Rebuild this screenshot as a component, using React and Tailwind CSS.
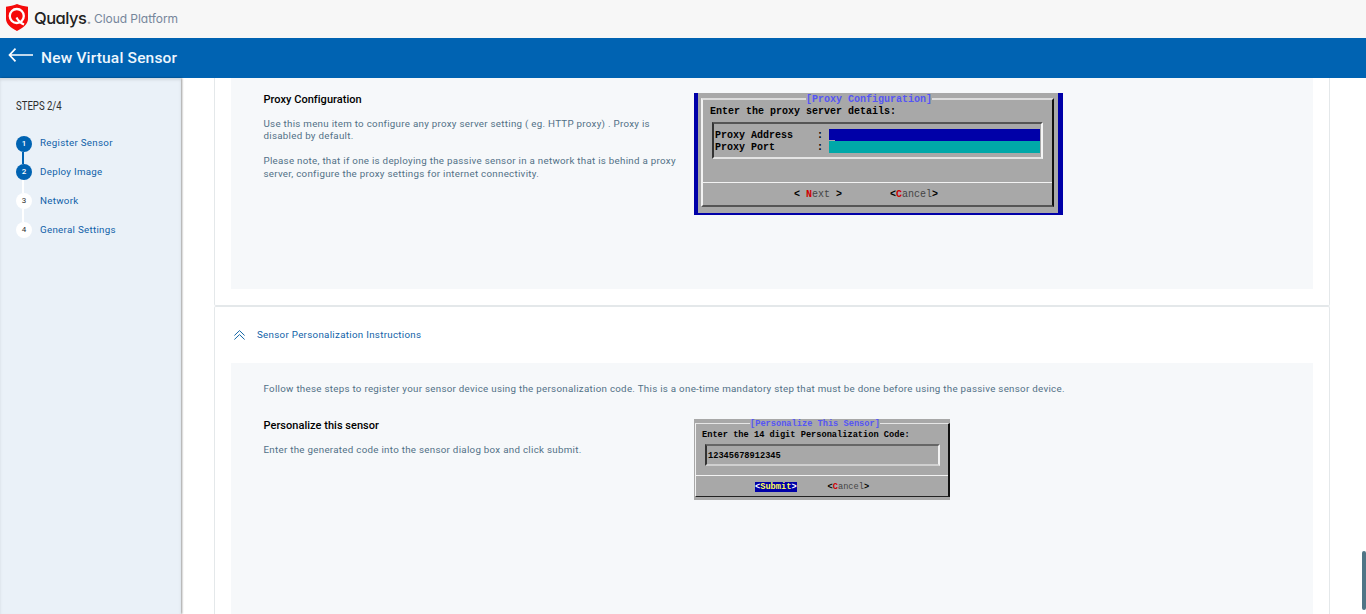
function Step({ n, label, done, line, lineDone, first }) {
  return (
    <li className={`flex items-start ${first ? 'h-[28px]' : 'h-[29px]'}`}>
      <div className="flex h-full w-4 shrink-0 flex-col items-center">
        <span className={`flex size-4 shrink-0 items-center justify-center rounded-full text-[8px] ${done ? 'bg-[#0063b2] font-medium text-white' : 'bg-white text-[#333]'}`}>{n}</span>
        {line && <span className={`mr-[2px] w-[2px] grow ${lineDone ? 'bg-[#0063b2]' : 'bg-white'}`} />}
      </div>
      <span className={`ml-2 text-[9.75px] leading-[14px] tracking-[0.29px] whitespace-nowrap text-[#0f5fa8] ${first ? '' : 'mt-px'}`}>{label}</span>
    </li>
  );
}

function ProxyDialog() {
  return (
    <div className="h-[122px] w-[369px] shrink-0 border-r-[5px] border-b-2 border-l-4 border-[#0000a8] bg-[#a8a8a8] pt-[5px] pr-[4px] pl-[3px] font-['Liberation_Mono',monospace] text-[10px] leading-[12px] font-bold whitespace-pre text-black">
      <div className="relative h-[109px] w-[353px] border-2 border-t-[#dcdcdc] border-r-[#111] border-b-[#555] border-l-[#f2f2f2]">
        <span className="absolute -top-[6px] left-[103px] h-[11px] bg-[#a8a8a8] leading-[11px] text-[#5555f5]">[Proxy Configuration]</span>
        <div className="pt-[6px] pl-[7px]">Enter the proxy server details:</div>
        <div className="mt-[4px] ml-[9px] h-[37px] w-[331px] border-2 border-t-[#555] border-r-[#f5f5f5] border-b-[#e4e4e4] border-l-[#333] pt-[5px] pl-[1px]">
          <div className="flex"><span className="w-[114px] leading-[13px]">Proxy Address    :</span><span className="h-3 w-[211px] bg-[#0000a8]"><span className="mt-[11px] block h-px w-[6px] bg-[#a8a8a8]" /></span></div>
          <div className="-mt-px flex"><span className="w-[114px] leading-[13px]">Proxy Port       :</span><span className="h-3 w-[211px] bg-[#00a8a8]" /></div>
        </div>
        <div className="mt-[23px] flex border-t border-[#f2f2f2] pt-[6px] pl-[91px]">
          <span className="w-[96px]">{'< '}<b className="text-[#d00000]">N</b><span className="font-normal text-[#444]">ext</span>{' >'}</span>
          <span>{'<'}<b className="text-[#d00000]">C</b><span className="font-normal text-[#444]">ancel</span>{'>'}</span>
        </div>
      </div>
    </div>
  );
}

function PersonalizeDialog() {
  return (
    <div className="h-[81px] w-[256px] shrink-0 bg-[#a8a8a8] pt-1 pl-px font-['Liberation_Mono',monospace] text-[8.67px] leading-[10px] font-bold tracking-normal whitespace-pre text-black">
      <div className="relative h-[74px] w-[255px] border border-r-2 border-t-[#e6e6e6] border-r-[#111] border-b-[#222] border-l-[#f2f2f2]">
        <span className="absolute -top-[5px] left-[54px] bg-[#a8a8a8] text-[#5555f5]">[Personalize This Sensor]</span>
        <div className="pt-[6px] pl-[6px]">Enter the 14 digit Personalization Code:</div>
        <div className="mt-[4px] ml-[9px] h-[22px] w-[235px] border-2 border-t-[#666] border-r-[#f2f2f2] border-b-[#d0d0d0] border-l-[#333] pt-[5px] pl-[1px]">12345678912345</div>
        <div className="mt-[9px] flex border-t border-[#f2f2f2] pt-[6px] pl-[59px]">
          <span className="mr-[31px] bg-[#0000a8] text-white">{'<'}<span className="text-[#ffff55]">Submit</span>{'>'}</span>
          <span>{'<'}<b className="text-[#d00000]">C</b><span className="font-normal text-[#444]">ancel</span>{'>'}</span>
        </div>
      </div>
    </div>
  );
}

export default function App() {
  return (
    <div className="flex h-[614px] w-[1366px] flex-col overflow-hidden bg-white font-['Roboto',sans-serif]">
      <header className="flex h-[38px] shrink-0 items-center bg-[#f7f7f7] pb-[2px] pl-[6px]">
        <svg className="mb-[2px] h-[27px] w-[22px]" viewBox="0 0 22 27" fill="none">
          <path d="M0 2.700C4 2.400 7.500 1.500 11 0c3.500 1.500 7 2.400 11 2.700v12.300c0 5-5 9-11 12C5 24 0 20 0 15z" fill="#f50a0a" />
          <circle cx="10.800" cy="12" r="7" stroke="#fff" strokeWidth="2.300" />
          <path d="M10.500 13.500c1.700 3.500 4 5.500 7.500 7" stroke="#fff" strokeWidth="2.100" />
        </svg>
        <span className="ml-[6px] font-['Inter',sans-serif] text-[16.5px] leading-6 font-medium tracking-[-0.5px] text-[#222] [font-feature-settings:'cv11']">Qualys<span className="text-[#999]">.</span></span>
        <span className="ml-[3px] pt-px font-['Inter',sans-serif] text-[12px] leading-6 tracking-[-0.05px] text-[#76869b] [font-feature-settings:'cv11']">Cloud Platform</span>
      </header>
      <div className="flex h-10 shrink-0 items-center bg-[#0063b2] pl-2">
        <svg className="mb-[6px] h-[14px] w-[25px]" viewBox="0 0 25 14" fill="none" stroke="#fff" strokeWidth="1.700"><path d="M7.500 .7 1.500 7l6 6.300M1.500 7H25" /></svg>
        <h1 className="ml-2 pt-px text-[15.5px] font-medium tracking-[0.18px] text-[#eef6fd]">New Virtual Sensor</h1>
      </div>
      <div className="flex min-h-0 grow">
        <aside className="z-10 w-[181px] shrink-0 bg-[#eaf1f8] pl-4 shadow-[1px_0_2px_rgba(0,0,0,0.4),inset_0_2px_3px_rgba(0,0,0,0.1)]">
          <div className="mt-[15px] h-[18px]"><span className="inline-block origin-left scale-x-[0.71] text-[13.5px] leading-[18px] whitespace-nowrap text-[#2d2d2d]">STEPS 2/4</span></div>
          <ol className="mt-[25px]">
            <Step n="1" label="Register Sensor" done line lineDone first />
            <Step n="2" label="Deploy Image" done line />
            <Step n="3" label="Network" line />
            <Step n="4" label="General Settings" />
          </ol>
        </aside>
        <main className="relative grow pl-[33px]">
          <section className="h-[228px] w-[1116px] rounded-b-[2px] border-x border-b border-[#e4e8ea] px-4">
            <div className="flex h-[211px] bg-[#f6f8fa] pt-[15px] pl-[32.5px]">
              <div className="w-[430.500px] shrink-0 text-[9.75px] tracking-[0.28px] text-[#517086]">
                <h2 className="text-[11px] leading-[14px] font-medium tracking-[0.03px] text-black">Proxy Configuration</h2>
                <p className="mt-[11px] leading-[12px] whitespace-nowrap">Use this menu item to configure any proxy server setting ( eg. HTTP proxy) . Proxy is<br />disabled by default.</p>
                <p className="mt-[12px] leading-[13px] whitespace-nowrap">Please note, that if one is deploying the passive sensor in a network that is behind a proxy<br />server, configure the proxy settings for internet connectivity.</p>
              </div>
              <ProxyDialog />
            </div>
          </section>
          <section className="h-[320px] w-[1116px] rounded-t-[2px] border-x border-t border-[#e4e8ea] px-4">
            <div className="flex h-[56px] items-center pl-[3px]">
              <svg className="h-[10px] w-[11px]" viewBox="0 0 11 10" fill="none" stroke="#1769a8" strokeWidth="1"><path d="M.4 5.500 5.500.6l5.100 4.900M.4 9.500l5.100-4.900 5.100 4.900" /></svg>
              <span className="ml-3 text-[9.75px] tracking-[0.3px] text-[#0f5fa8]">Sensor Personalization Instructions</span>
            </div>
            <div className="h-[270px] bg-[#f6f8fa] pt-[19px] pl-[32.5px] text-[9.75px] tracking-[0.285px] text-[#517086]">
              <p className="leading-[14px]">Follow these steps to register your sensor device using the personalization code. This is a one-time mandatory step that must be done before using the passive sensor device.</p>
              <div className="mt-[23px] flex">
                <div className="w-[430.500px] shrink-0">
                  <h2 className="text-[11px] leading-[14px] font-medium tracking-[0.03px] text-black">Personalize this sensor</h2>
                  <p className="mt-[10px] leading-[14px]">Enter the generated code into the sensor dialog box and click submit.</p>
                </div>
                <PersonalizeDialog />
              </div>
            </div>
          </section>
          <div className="absolute top-[473px] right-0 h-[59px] w-1 rounded-sm bg-[#507586]" />
        </main>
      </div>
    </div>
  );
}
